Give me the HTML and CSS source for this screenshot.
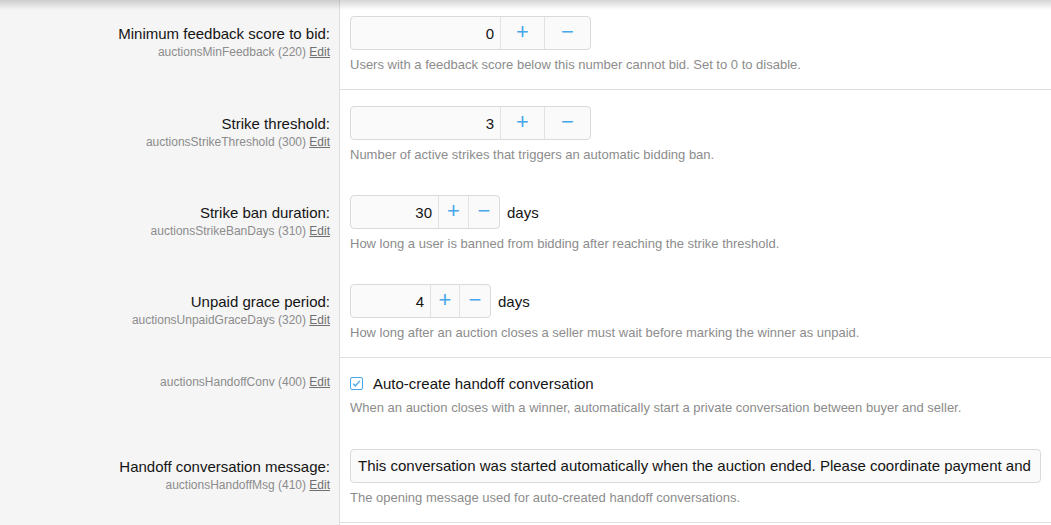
FILE: index.html
```html
<!DOCTYPE html>
<html lang="en">
<head>
<meta charset="utf-8">
<title>Auction options</title>
<link rel="stylesheet" href="styles.css">
</head>
<body>
<div class="top-shadow"></div>
<div class="form">
  <div class="row">
    <div class="term">
      <div class="label">Minimum feedback score to bid:</div>
      <div class="hint">auctionsMinFeedback (220) <a href="#">Edit</a></div>
    </div>
    <div class="field sep">
      <div class="line">
        <div class="spin wide">
          <span class="num">0</span>
          <span class="btn">+</span>
          <span class="btn">−</span>
        </div>
      </div>
      <div class="explain">Users with a feedback score below this number cannot bid. Set to 0 to disable.</div>
    </div>
  </div>

  <div class="row">
    <div class="term">
      <div class="label">Strike threshold:</div>
      <div class="hint">auctionsStrikeThreshold (300) <a href="#">Edit</a></div>
    </div>
    <div class="field">
      <div class="line">
        <div class="spin wide">
          <span class="num">3</span>
          <span class="btn">+</span>
          <span class="btn">−</span>
        </div>
      </div>
      <div class="explain">Number of active strikes that triggers an automatic bidding ban.</div>
    </div>
  </div>

  <div class="row">
    <div class="term">
      <div class="label">Strike ban duration:</div>
      <div class="hint">auctionsStrikeBanDays (310) <a href="#">Edit</a></div>
    </div>
    <div class="field">
      <div class="line">
        <div class="spin small">
          <span class="num n2">30</span>
          <span class="btn">+</span>
          <span class="btn">−</span>
        </div>
        <span class="unit">days</span>
      </div>
      <div class="explain">How long a user is banned from bidding after reaching the strike threshold.</div>
    </div>
  </div>

  <div class="row">
    <div class="term">
      <div class="label">Unpaid grace period:</div>
      <div class="hint">auctionsUnpaidGraceDays (320) <a href="#">Edit</a></div>
    </div>
    <div class="field sep">
      <div class="line">
        <div class="spin small">
          <span class="num n1">4</span>
          <span class="btn b1">+</span>
          <span class="btn b1">−</span>
        </div>
        <span class="unit">days</span>
      </div>
      <div class="explain">How long after an auction closes a seller must wait before marking the winner as unpaid.</div>
    </div>
  </div>

  <div class="row check-row">
    <div class="term">
      <div class="hint">auctionsHandoffConv (400) <a href="#">Edit</a></div>
    </div>
    <div class="field">
      <label class="check">
        <span class="box"><svg viewBox="0 0 13 13" width="13" height="13"><path d="M3.2 6.8 L5.4 9 L9.8 3.8" fill="none" stroke="#47a7eb" stroke-width="1.3"/></svg></span>
        <span>Auto-create handoff conversation</span>
      </label>
      <div class="explain">When an auction closes with a winner, automatically start a private conversation between buyer and seller.</div>
    </div>
  </div>

  <div class="row">
    <div class="term">
      <div class="label">Handoff conversation message:</div>
      <div class="hint">auctionsHandoffMsg (410) <a href="#">Edit</a></div>
    </div>
    <div class="field sep">
      <div class="line">
        <div class="text-input">This conversation was started automatically when the auction ended. Please coordinate payment and</div>
      </div>
      <div class="explain">The opening message used for auto-created handoff conversations.</div>
    </div>
  </div>
</div>
</body>
</html>
```

FILE: styles.css
```css
html, body {
  margin: 0;
  padding: 0;
  height: 100%;
}

body {
  font-family: "Liberation Sans", Arial, sans-serif;
  color: #141414;
  background: linear-gradient(to right, #f5f5f5 0, #f5f5f5 339px, #dfdfdf 339px, #dfdfdf 340px, #ffffff 340px);
  overflow: hidden;
}

.top-shadow {
  position: fixed;
  top: 0;
  left: 0;
  right: 0;
  height: 10px;
  background: linear-gradient(to bottom, rgba(0,0,0,0.16), rgba(0,0,0,0));
  pointer-events: none;
}

.form {
  display: flex;
  flex-direction: column;
}

.row {
  display: grid;
  grid-template-columns: 340px minmax(0, 1fr);
}

.term {
  padding: 16px 10px 0 10px;
  text-align: right;
}

.label {
  font-size: 15px;
  line-height: 34px;
  height: 34px;
  margin-bottom: -7px;
  padding-top: 1px;
}

.hint {
  font-size: 12px;
  color: #8c8c8c;
  line-height: 17px;
}

.hint a {
  color: #707070;
  text-decoration: underline;
}

.field {
  min-width: 0;
  padding: 16px 10px 16px 10px;
}

.field.sep {
  border-bottom: 1px solid #dfdfdf;
}

.row.check-row .field {
  padding-bottom: 17px;
}

.line {
  display: flex;
  align-items: center;
  gap: 7px;
  height: 34px;
  min-width: 0;
}

.spin {
  display: flex;
  height: 34px;
  box-sizing: border-box;
  border: 1px solid #dadada;
  border-radius: 4px;
  background: #fafafa;
  overflow: hidden;
}

.num {
  display: flex;
  align-items: center;
  justify-content: flex-end;
  padding-right: 6px;
  font-size: 15px;
  box-sizing: border-box;
  border-right: 1px solid #e2e2e2;
}

.wide .num { width: 150px; }
.wide .btn { width: 44px; }
.wide .btn:last-child { width: 45px; }

.small .num.n2 { width: 88px; }
.small .num.n1 { width: 80px; }
.small .btn { width: 30px; }
.small .btn.b1 { width: 29px; }
.small .btn.b1:last-child { width: 30px; }

.btn {
  display: flex;
  align-items: center;
  justify-content: center;
  color: #47a7eb;
  font-size: 22px;
  box-sizing: border-box;
  border-right: 1px solid #e2e2e2;
  padding-bottom: 2px;
}

.btn:last-child {
  border-right: none;
}

.unit {
  font-size: 15px;
}

.explain {
  margin-top: 6px;
  font-size: 13px;
  line-height: 17px;
  color: #8c8c8c;
}

.check-row .hint {
  line-height: 19px;
  margin-top: -1px;
}

.check {
  display: flex;
  align-items: center;
  gap: 10px;
  font-size: 15px;
  line-height: 19px;
}

.box {
  width: 13px;
  height: 13px;
  box-sizing: border-box;
  border: 1px solid #47a7eb;
  border-radius: 2px;
  background: #fff;
  display: flex;
  align-items: center;
  justify-content: center;
}

.box svg {
  display: block;
  flex: none;
}

.text-input {
  flex: 1;
  min-width: 0;
  height: 34px;
  box-sizing: border-box;
  border: 1px solid #dadada;
  border-radius: 4px;
  background: #fafafa;
  font-size: 15px;
  line-height: 32px;
  padding: 0 7px;
  white-space: nowrap;
  overflow: hidden;
}
```
